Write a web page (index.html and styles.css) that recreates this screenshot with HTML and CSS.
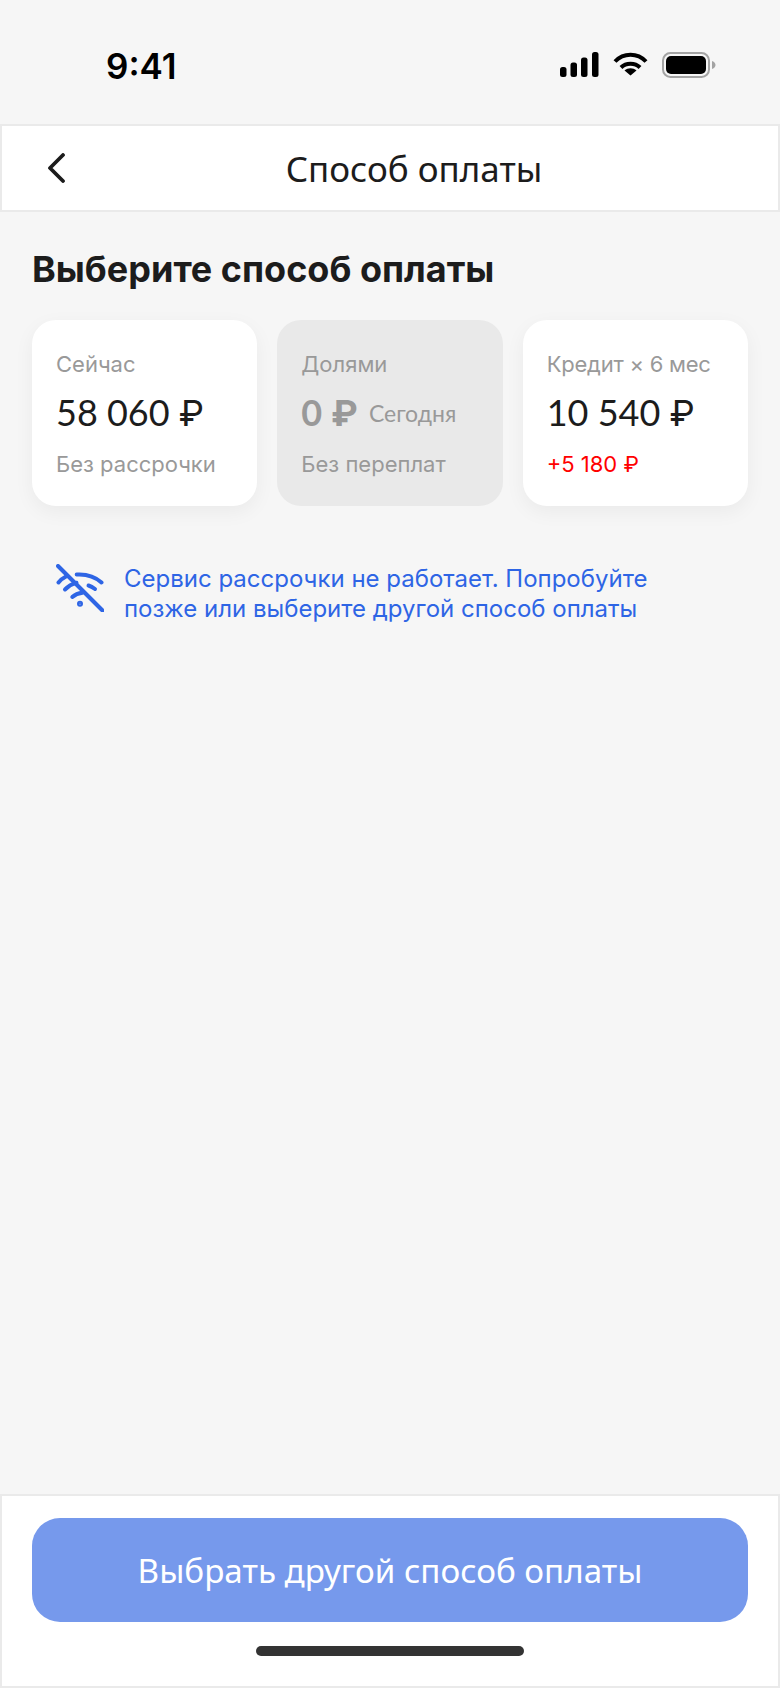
FILE: index.html
```html
<!DOCTYPE html>
<html lang="ru">

<head>
    <meta charset="UTF-8">
    <meta name="viewport" content="width=device-width, initial-scale=1.0">
    <title>Способ оплаты</title>
    <link rel="stylesheet" href="styles.css">
</head>

<body>

    <div class="status">
        <span class="time">9:41</span>
        <div class="status-icons">
            <svg class="signal" width="39" height="25" viewBox="0 0 39 25" fill="#000">
                <rect x="0" y="15" width="6.5" height="10" rx="2.5"/>
                <rect x="10.5" y="10.5" width="6.5" height="14.5" rx="2.5"/>
                <rect x="21" y="5.5" width="6.5" height="19.5" rx="2.5"/>
                <rect x="32" y="0" width="6.5" height="25" rx="2.5"/>
            </svg>
            <svg class="wifi" width="35" height="24" viewBox="0 0 35 24" fill="none" stroke="#000" stroke-width="4">
                <path d="M2 9.5C10.5 .5 24.5 .5 33 9.5"/>
                <path d="M8 15.5C13 10.5 22 10.5 27 15.5"/>
                <path d="M17.5 23.5L11.5 18.5C15 15.5 20 15.5 23.5 18.5Z" fill="#000" stroke="none"/>
            </svg>
            <svg class="battery" width="56" height="26" viewBox="0 0 56 26" fill="none">
                <rect x="1" y="1" width="46" height="24" rx="7.5" stroke="#a3a3a3" stroke-width="2"/>
                <rect x="4" y="4" width="40" height="18" rx="5" fill="#000"/>
                <path d="M50 9C52.5 10 53.5 11.5 53.5 13C53.5 14.5 52.5 16 50 17Z" fill="#a3a3a3"/>
            </svg>
        </div>
    </div>

    <header class="topbar">
        <svg class="back" width="20" height="30" viewBox="0 0 20 30" fill="none" stroke="#1c1c1c" stroke-width="3.8" stroke-linecap="round" stroke-linejoin="round">
            <path d="M16 2L3 15L16 28"/>
        </svg>
        <h1>Способ оплаты</h1>
    </header>

    <main class="content">
        <h2>Выберите способ оплаты</h2>

        <div class="cards">
            <div class="card">
                <p class="label">Сейчас</p>
                <p class="amount">58 060 ₽</p>
                <p class="label">Без рассрочки</p>
            </div>
            <div class="card off">
                <p class="label">Долями</p>
                <p class="amount"><b>0 ₽</b> <span class="label today">Сегодня</span></p>
                <p class="label">Без переплат</p>
            </div>
            <div class="card">
                <p class="label tight">Кредит × 6 мес</p>
                <p class="amount">10 540 ₽</p>
                <p class="label extra">+5 180 ₽</p>
            </div>
        </div>

        <div class="notice">
            <svg width="48" height="48" viewBox="0 0 48 48" fill="none" stroke="#2e65e5" stroke-width="4" stroke-linecap="round">
                <path d="M2 2L46.5 46.5"/>
                <path d="M20.7 10.5C29 10 39 12.5 45.5 18.5"/>
                <path d="M2.5 18.5C4.5 16 7 14 10 12.5"/>
                <path d="M9 25.5C12 22.5 16 20 20.5 18.7"/>
                <path d="M32.5 21.5C34.7 22.2 37 23.5 39 25"/>
                <path d="M16.3 33C18.5 31 22 29.3 26.5 28.8"/>
                <circle cx="24" cy="39.7" r="1" fill="#2e65e5"/>
            </svg>
            <p>Сервис рассрочки не работает. Попробуйте позже или выберите другой способ оплаты</p>
        </div>
    </main>

    <footer class="bottom">
        <button class="btn">Выбрать другой способ оплаты</button>
        <div class="home"></div>
    </footer>

</body>

</html>
```

FILE: styles.css
```css
* {
    margin: 0;
    padding: 0;
    box-sizing: border-box;
}

body {
    width: 780px;
    height: 1688px;
    background-color: #f6f6f6;
    color: #1c1c1c;
    font-family: Inter, "Noto Sans", sans-serif;
    display: flex;
    flex-direction: column;
}

.status {
    height: 124px;
    padding: 50px 62px 0 106px;
    display: flex;
    justify-content: space-between;
    align-items: flex-start;
}

.time {
    font-size: 35px;
    font-weight: 600;
    line-height: 32px;
    color: #000;
}

.status-icons {
    display: flex;
    align-items: flex-start;
    gap: 14px;
    padding-top: 2px;
}

.topbar {
    height: 88px;
    background-color: #fff;
    border: 2px solid #eaeaea;
    padding-left: 48px;
    display: flex;
    align-items: center;
    justify-content: center;
    position: relative;
}

.back {
    position: absolute;
    left: 45px;
    top: 27px;
}

.topbar h1 {
    font-family: "Noto Sans", sans-serif;
    font-size: 35px;
    font-weight: 400;
}

.content {
    flex: 1;
    padding: 36px 32px 0;
}

.content h2 {
    font-size: 36px;
    font-weight: 700;
    line-height: 42px;
}

.cards {
    display: grid;
    grid-template-columns: repeat(3, 1fr);
    gap: 20px;
    margin-top: 30px;
}

.card {
    height: 186px;
    background-color: #fff;
    border-radius: 24px;
    padding: 29px 24px 0;
    box-shadow: 0 6px 20px rgba(0, 0, 0, 0.05);
}

.card.off {
    background-color: #e9e9e9;
    box-shadow: none;
}

.label {
    font-size: 22px;
    line-height: 30px;
    color: #999;
}

.tight {
    letter-spacing: -0.23px;
}

.amount {
    font-family: Lato, Inter, sans-serif;
    font-size: 36px;
    line-height: 44px;
    margin: 11px 0 15px;
    white-space: nowrap;
}

.amount b {
    font-weight: 700;
    color: #999;
}

.today {
    font-size: 23px;
    margin-left: 2px;
    vertical-align: 4px;
}

.extra {
    color: #f00;
}

.notice {
    display: flex;
    gap: 20px;
    margin: 58px 24px 0;
}

.notice p {
    font-size: 24px;
    line-height: 30px;
    color: #2e65e5;
    width: 540px;
}

.bottom {
    height: 194px;
    background-color: #fff;
    border: 2px solid #eaeaea;
    padding: 22px 30px 0;
}

.btn {
    display: block;
    width: 100%;
    height: 104px;
    border: none;
    border-radius: 28px;
    background-color: #7699ec;
    color: #fff;
    font-family: "Noto Sans", sans-serif;
    font-size: 33.2px;
}

.home {
    width: 268px;
    height: 10px;
    margin: 24px auto 0;
    background-color: #333;
    border-radius: 5px;
}
```
